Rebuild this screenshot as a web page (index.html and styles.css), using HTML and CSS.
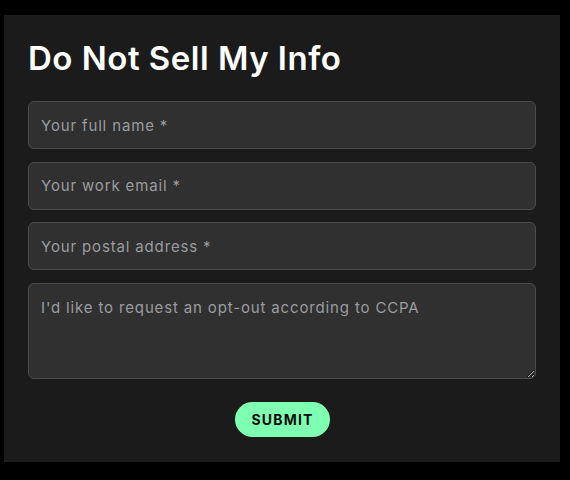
FILE: index.html
```html
<!DOCTYPE html>
<html lang="en">
<head>
<meta charset="utf-8">
<title>Do Not Sell My Info</title>
<link rel="stylesheet" href="styles.css">
</head>
<body>
<main class="card">
  <h1 class="title">Do Not Sell My Info</h1>
  <form class="form">
    <input class="field" type="text" placeholder="Your full name *">
    <input class="field" type="email" placeholder="Your work email *">
    <input class="field" type="text" placeholder="Your postal address *">
    <textarea class="field area" placeholder="I'd like to request an opt-out according to CCPA"></textarea>
    <div class="actions">
      <button class="submit" type="button">SUBMIT</button>
    </div>
  </form>
</main>
</body>
</html>
```
FILE: styles.css
```css
html, body {
  margin: 0;
  padding: 0;
  background: #000;
}
body {
  padding: 15px 10px 18px 4px;
  font-family: Inter, "Open Sans", sans-serif;
}
.card {
  background: #1b1b1b;
  padding: 22px 24px 24px 24px;
  height: 401px;
  box-sizing: content-box;
}
.title {
  margin: 0 0 22px 0;
  color: #fff;
  font-size: 33px;
  font-weight: 600;
  line-height: 42px;
  letter-spacing: 0.5px;
}
.form {
  display: flex;
  flex-direction: column;
  gap: 12.5px;
}
.field {
  display: block;
  box-sizing: border-box;
  width: 100%;
  height: 48px;
  margin: 0;
  padding: 0 12px;
  background: #303030;
  border: 1px solid #4b4b4b;
  border-radius: 6px;
  color: #ddd;
  font-family: inherit;
  font-size: 15px;
  letter-spacing: 0.85px;
  outline: none;
}
.field::placeholder {
  color: #9a9c9f;
  opacity: 1;
}
.area {
  height: 96px;
  padding: 14px 12px;
  resize: vertical;
  line-height: 20px;
}
.actions {
  display: flex;
  justify-content: center;
  padding-top: 11px;
}
.submit {
  width: 95px;
  height: 35px;
  padding: 0 0 0 1px;
  border: none;
  border-radius: 18px;
  background: #7fffb2;
  color: #0a0a0a;
  font-family: inherit;
  font-size: 14px;
  font-weight: 700;
  letter-spacing: 1.2px;
  cursor: pointer;
}
```
